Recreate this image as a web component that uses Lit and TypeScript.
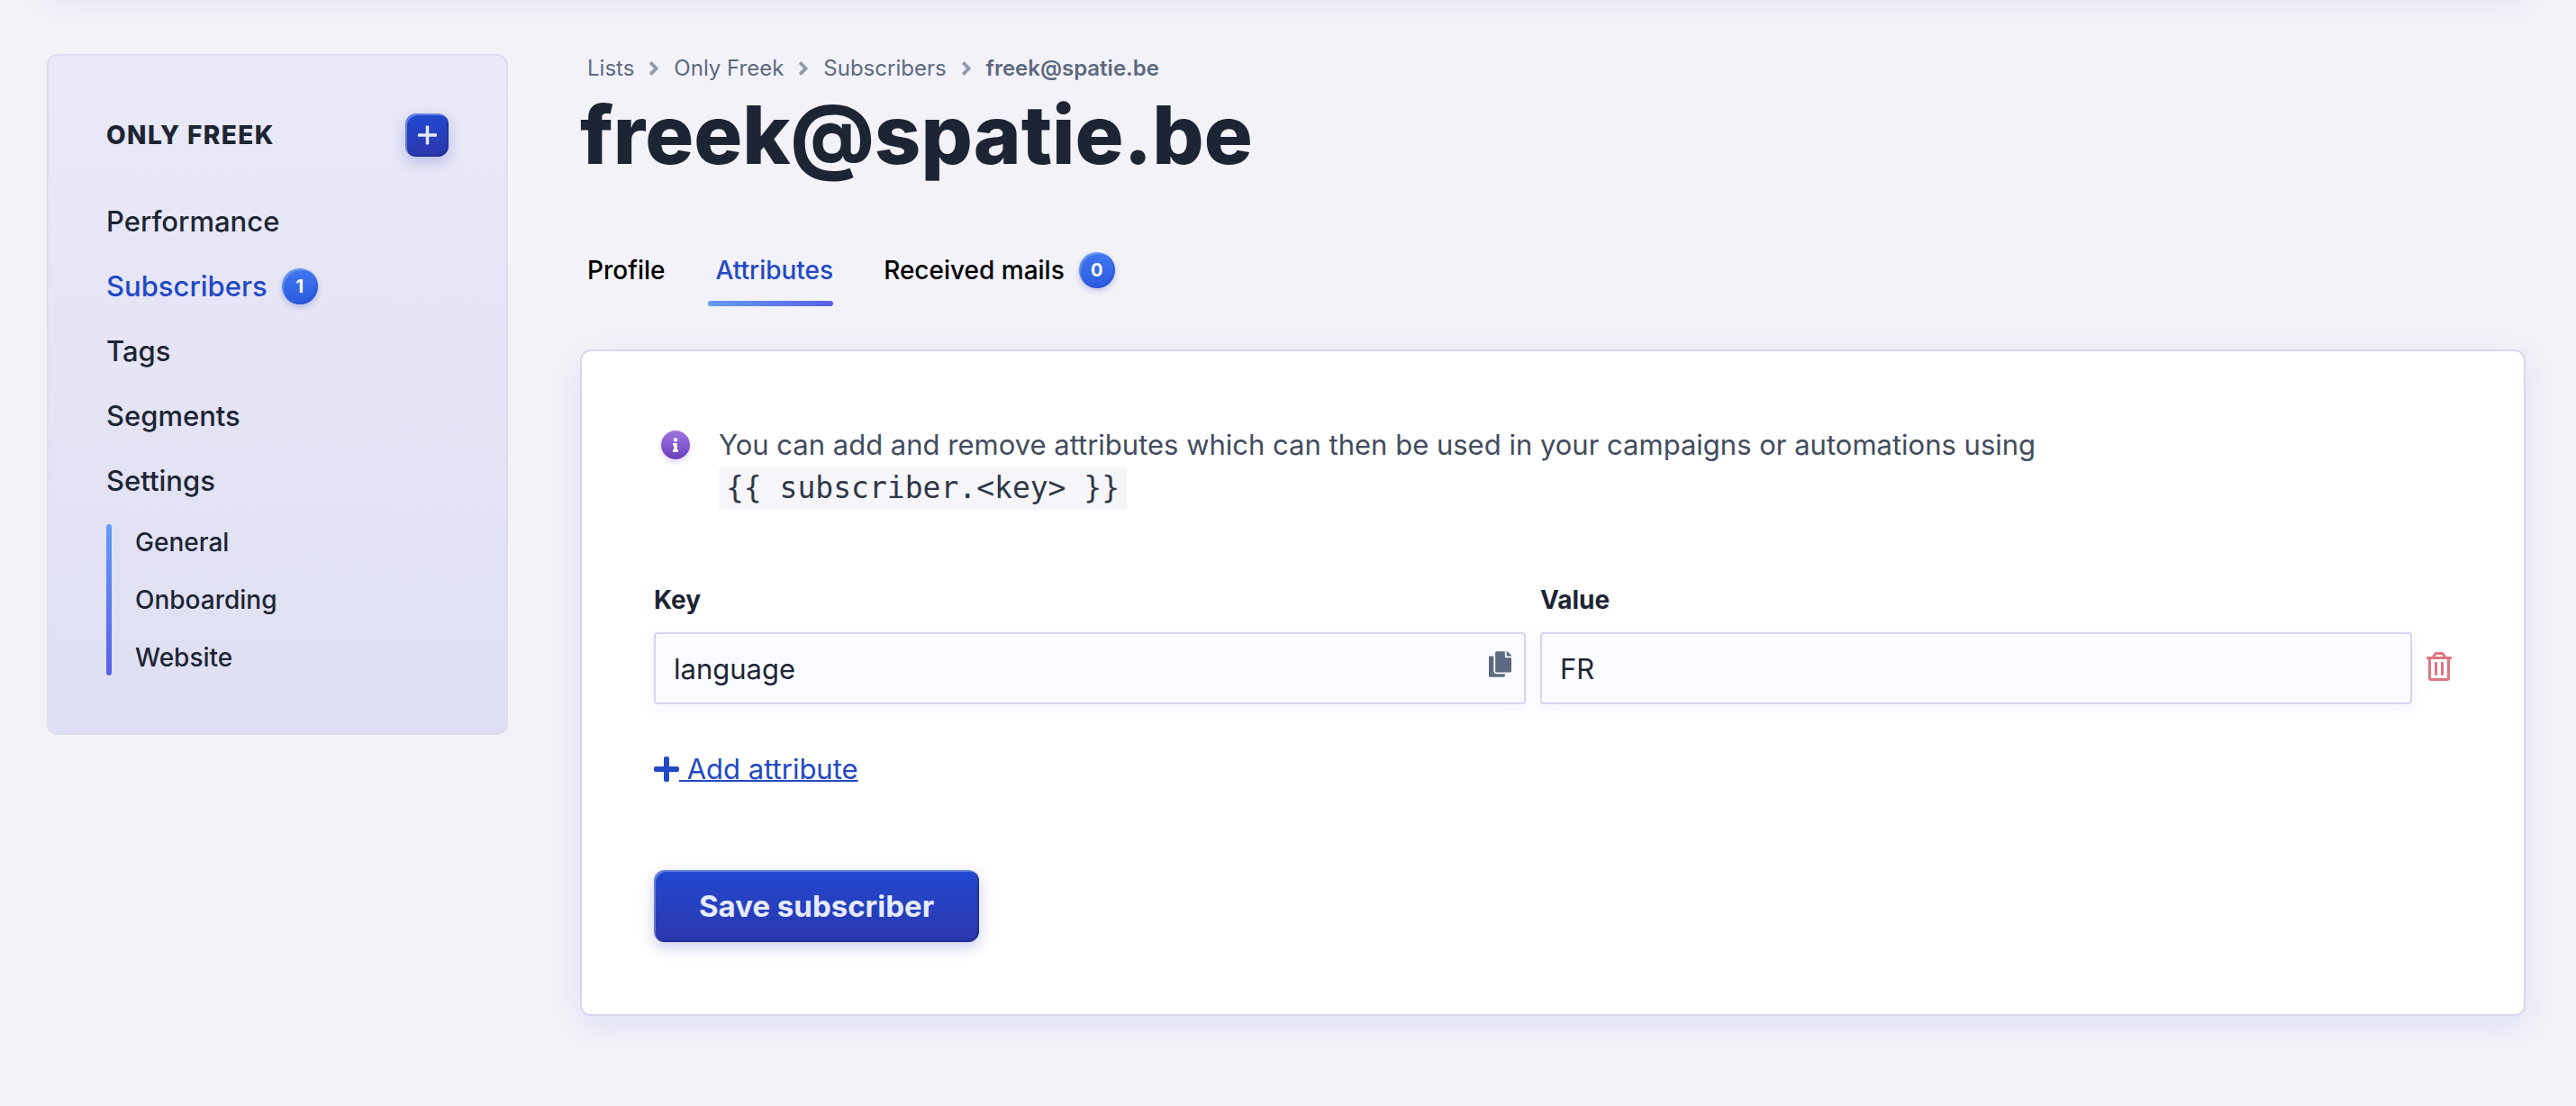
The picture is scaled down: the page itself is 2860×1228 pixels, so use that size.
import { LitElement, html, css, svg } from "lit";
import { customElement, state } from "lit/decorators.js";
import { classMap } from "lit/directives/class-map.js";

const icons = {
  angle: {
    box: "0 0 256 512",
    path: "M224.3 273l-136 136c-9.4 9.4-24.6 9.4-33.9 0l-22.6-22.6c-9.4-9.4-9.4-24.6 0-33.9l96.4-96.4-96.4-96.4c-9.4-9.4-9.4-24.6 0-33.9L54.3 103c9.4-9.4 24.6-9.4 33.9 0l136 136c9.5 9.4 9.5 24.6.1 34z",
  },
  plus: {
    box: "0 0 448 512",
    path: "M416 208H272V64c0-17.67-14.33-32-32-32h-32c-17.67 0-32 14.33-32 32v144H32c-17.67 0-32 14.33-32 32v32c0 17.67 14.33 32 32 32h144v144c0 17.67 14.33 32 32 32h32c17.67 0 32-14.33 32-32V304h144c17.67 0 32-14.33 32-32v-32c0-17.67-14.33-32-32-32z",
  },
  plusThin: {
    box: "0 0 384 512",
    path: "M368 224H224V80c0-8.84-7.16-16-16-16h-32c-8.84 0-16 7.16-16 16v144H16c-8.84 0-16 7.16-16 16v32c0 8.84 7.16 16 16 16h144v144c0 8.84 7.16 16 16 16h32c8.84 0 16-7.16 16-16V288h144c8.84 0 16-7.16 16-16v-32c0-8.84-7.16-16-16-16z",
  },
  info: {
    box: "0 0 192 512",
    path: "M20 424.229h20V279.771H20c-11.046 0-20-8.954-20-20V212c0-11.046 8.954-20 20-20h112c11.046 0 20 8.954 20 20v212.229h20c11.046 0 20 8.954 20 20V492c0 11.046-8.954 20-20 20H20c-11.046 0-20-8.954-20-20v-47.771c0-11.046 8.954-20 20-20zM96 0C56.235 0 24 32.235 24 72s32.235 72 72 72 72-32.235 72-72S135.764 0 96 0z",
  },
  copy: {
    box: "0 0 448 512",
    path: "M320 448v40c0 13.255-10.745 24-24 24H24c-13.255 0-24-10.745-24-24V120c0-13.255 10.745-24 24-24h72v296c0 30.879 25.121 56 56 56h168zm0-344V0H152c-13.255 0-24 10.745-24 24v368c0 13.255 10.745 24 24 24h272c13.255 0 24-10.745 24-24V128H344c-13.2 0-24-10.8-24-24zm120.971-31.029L375.029 7.029A24 24 0 0 0 358.059 0H352v96h96v-6.059a24 24 0 0 0-7.029-16.97z",
  },
  trash: {
    box: "0 0 448 512",
    path: "M268 416h24a12 12 0 0 0 12-12V188a12 12 0 0 0-12-12h-24a12 12 0 0 0-12 12v216a12 12 0 0 0 12 12zM432 80h-82.41l-34-56.7A48 48 0 0 0 274.41 0H173.59a48 48 0 0 0-41.16 23.3L98.41 80H16A16 16 0 0 0 0 96v16a16 16 0 0 0 16 16h16v336a48 48 0 0 0 48 48h288a48 48 0 0 0 48-48V128h16a16 16 0 0 0 16-16V96a16 16 0 0 0-16-16zM171.84 50.91A6 6 0 0 1 177 48h94a6 6 0 0 1 5.15 2.91L293.61 80H154.39zM368 464H80V128h288zm-212-48h24a12 12 0 0 0 12-12V188a12 12 0 0 0-12-12h-24a12 12 0 0 0-12 12v216a12 12 0 0 0 12 12z",
  },
};

const icon = (name: keyof typeof icons) => html`
  <svg class="icon icon-${name}" viewBox=${icons[name].box} aria-hidden="true">
    ${svg`<path fill="currentColor" d=${icons[name].path}></path>`}
  </svg>
`;

interface NavItem {
  label: string;
  count?: number;
  active?: boolean;
}

const listNav: NavItem[] = [
  { label: "Performance" },
  { label: "Subscribers", count: 1, active: true },
  { label: "Tags" },
  { label: "Segments" },
  { label: "Settings" },
];

const settingsNav = ["General", "Onboarding", "Website"];
const crumbs = ["Lists", "Only Freek", "Subscribers"];

const tabs: NavItem[] = [
  { label: "Profile" },
  { label: "Attributes", active: true },
  { label: "Received mails", count: 0 },
];

@customElement("app-root")
export class AppRoot extends LitElement {
  @state() private attributesList = [{ key: "language", value: "FR" }];

  static styles = css`
    :host {
      display: block;
      box-sizing: border-box;
      min-height: 100vh;
      overflow: hidden;
      background: #f3f2f8;
      color: #1d2534;
      font-family: Inter, "Liberation Sans", sans-serif;
      font-size: 31px;
      line-height: 48px;
    }
    *, *::before, *::after { box-sizing: border-box; }
    a { color: inherit; text-decoration: none; }
    button { font: inherit; border: 0; padding: 0; background: none; cursor: pointer; }
    ul, ol { list-style: none; margin: 0; padding: 0; }
    .icon { display: block; flex: none; }

    .topbar {
      height: 64px;
      margin: -76px 56px 72px 52px;
      background: #fff;
      border-radius: 12px;
      box-shadow: 0 10px 32px rgba(66, 100, 220, 0.12);
    }
    .layout {
      display: flex;
      align-items: flex-start;
      gap: 80px;
      padding: 0 56px 100px 52px;
    }

    .sidebar {
      flex: none;
      width: 512px;
      padding: 64px;
      border: 2px solid #dfdef0;
      border-radius: 12px;
      background: linear-gradient(#e9e9f7, #dfdff3);
      font-weight: 500;
    }
    .sidebar-head {
      display: flex;
      align-items: center;
      justify-content: space-between;
      margin-bottom: 48px;
    }
    .sidebar-title {
      margin: 0;
      font-size: 28px;
      font-weight: 800;
      letter-spacing: 0.05em;
      text-transform: uppercase;
    }
    .raised {
      color: #e6ebfd;
      background: linear-gradient(#2149d0, #2b37ad);
      box-shadow:
        inset 2px 2px 0 rgba(255, 255, 255, 0.3),
        inset -2px -2px 0 rgba(26, 42, 120, 0.5),
        0 6px 16px rgba(43, 60, 180, 0.25);
    }
    .add-button {
      display: grid;
      place-items: center;
      width: 48px;
      height: 48px;
      border-radius: 12px;
    }
    .icon-plusThin { width: 21px; height: 28px; }
    .nav { display: grid; gap: 24px; }
    .nav-link, .tab {
      display: flex;
      align-items: center;
      gap: 16px;
    }
    .nav-link.active, .tab.active { color: #2149c4; }
    .badge {
      display: grid;
      place-items: center;
      flex: none;
      width: 40px;
      height: 40px;
      border-radius: 50%;
      color: #fff;
      font-size: 20px;
      line-height: 24px;
      font-weight: 700;
      background: linear-gradient(#4078f0, #2b5ae0);
      box-shadow:
        inset 2px 2px 0 rgba(255, 255, 255, 0.2),
        inset -2px -2px 0 rgba(30, 70, 190, 0.3),
        0 3px 6px rgba(43, 60, 180, 0.25);
    }
    .subnav {
      display: flex;
      gap: 26px;
      margin-top: 24px;
      font-size: 28px;
      line-height: 40px;
    }
    .subnav::before {
      content: "";
      width: 6px;
      border-radius: 3px;
      background: linear-gradient(#639bf5, #5a5fe6);
    }
    .subnav-list { display: grid; gap: 24px; }

    .main { flex: 1; min-width: 0; }
    .crumbs {
      display: flex;
      align-items: center;
      gap: 16px;
      padding: 0 8px;
      font-size: 24px;
      line-height: 32px;
      color: #5c6980;
    }
    .crumb { display: flex; align-items: center; gap: 16px; }
    .crumb-current { font-weight: 600; }
    .icon-angle { width: 12px; height: 24px; color: #8f99ad; }
    .title {
      margin: 2px 0 0;
      font-size: 90px;
      line-height: 112px;
      font-weight: 800;
    }
    .tabs {
      display: flex;
      gap: 48px;
      margin: 60px 0 48px;
      font-size: 28px;
      line-height: 40px;
      font-weight: 500;
      color: #000;
    }
    .tab { padding: 14px 0 14px 8px; border-bottom: 6px solid transparent; }
    .tab-item.active::after {
      content: "";
      display: block;
      height: 6px;
      margin-top: -6px;
      border-radius: 3px;
      background: linear-gradient(90deg, #639bf5, #5a5fe6);
    }

    .card {
      padding: 80px;
      border: 2px solid #d8d6f0;
      border-radius: 12px;
      background: #fff;
      box-shadow: 0 10px 32px rgba(66, 100, 220, 0.12);
    }
    .help {
      display: flex;
      gap: 32px;
      padding-left: 8px;
      color: #434c5e;
    }
    .help-mark {
      display: grid;
      place-items: center;
      flex: none;
      width: 32px;
      height: 32px;
      margin-top: 8px;
      border-radius: 50%;
      color: #fff;
      background: linear-gradient(#9f75e0, #6b3fc0);
      box-shadow: 0 3px 6px rgba(100, 60, 180, 0.2);
    }
    .icon-info { width: 6px; height: 16px; }
    .help-text { margin: 0; max-width: 1536px; }
    .code {
      display: block;
      width: fit-content;
      padding: 0 8px;
      border-radius: 4px;
      background: #f6f6fa;
      color: #2f3746;
      font-family: "DejaVu Sans Mono", monospace;
      font-size: 33px;
    }
    .fields {
      display: grid;
      grid-template-columns: 1fr 1fr 28px;
      gap: 16px;
      align-items: center;
      margin-top: 80px;
    }
    .label {
      font-size: 28px;
      line-height: 40px;
      font-weight: 700;
    }
    .label-value { grid-column: 2 / 4; }
    .field { display: grid; align-items: center; }
    .field > * { grid-area: 1 / 1; }
    .input {
      width: 100%;
      height: 80px;
      padding: 0 20px;
      border: 2px solid #d6d5f0;
      border-radius: 4px;
      background: #fafbff;
      color: #1d2534;
      font: inherit;
      box-shadow: 0 4px 16px rgba(120, 150, 250, 0.12);
      outline: none;
    }
    .copy-button {
      justify-self: end;
      margin: 0 16px 10px 0;
      color: #5c6980;
    }
    .icon-copy { width: 25px; height: 29px; }
    .trash-button { color: #dd7681; }
    .icon-trash { width: 28px; height: 32px; margin-bottom: 4px; }
    .add-link {
      display: flex;
      align-items: center;
      width: fit-content;
      margin-top: 48px;
      color: #2149c4;
    }
    .add-link .icon-plus { width: 28px; height: 32px; }
    .add-text {
      white-space: pre;
      text-decoration: underline;
      text-decoration-thickness: 2px;
    }
    .save-button {
      display: block;
      height: 80px;
      margin-top: 88px;
      padding: 0 50px;
      border-radius: 12px;
      font-size: 33px;
      font-weight: 700;
    }
  `;

  private addAttribute(event: Event) {
    event.preventDefault();
    this.attributesList = [...this.attributesList, { key: "", value: "" }];
  }

  private removeAttribute(index: number) {
    this.attributesList = this.attributesList.filter((_, i) => i !== index);
  }

  private renderSidebar() {
    return html`
      <aside class="sidebar">
        <div class="sidebar-head">
          <h2 class="sidebar-title">Only Freek</h2>
          <button class="add-button raised" type="button" aria-label="Add">${icon("plusThin")}</button>
        </div>
        <nav>
          <ul class="nav">
            ${listNav.map(
              (item) => html`<li>
                <a href="#" class=${classMap({ "nav-link": true, active: !!item.active })}>
                  ${item.label}${item.count !== undefined ? html`<span class="badge">${item.count}</span>` : ""}
                </a>
              </li>`
            )}
          </ul>
          <div class="subnav">
            <ul class="subnav-list">
              ${settingsNav.map((label) => html`<li><a href="#">${label}</a></li>`)}
            </ul>
          </div>
        </nav>
      </aside>
    `;
  }

  private renderForm() {
    return html`
      <form class="card" @submit=${(e: Event) => e.preventDefault()}>
        <div class="help">
          <span class="help-mark">${icon("info")}</span>
          <p class="help-text">
            You can add and remove attributes which can then be used in your campaigns or automations using
            <code class="code">{{ subscriber.&lt;key&gt; }}</code>
          </p>
        </div>
        <div class="fields">
          <label class="label" for="key-0">Key</label>
          <label class="label label-value" for="value-0">Value</label>
          ${this.attributesList.map(
            (row, i) => html`
              <div class="field">
                <input class="input" id="key-${i}" type="text" .value=${row.key} />
                <button class="copy-button" type="button" aria-label="Copy">${icon("copy")}</button>
              </div>
              <input class="input" id="value-${i}" type="text" .value=${row.value} />
              <button class="trash-button" type="button" aria-label="Remove" @click=${() => this.removeAttribute(i)}>
                ${icon("trash")}
              </button>
            `
          )}
        </div>
        <a class="add-link" href="#" @click=${this.addAttribute}>${icon("plus")}<span class="add-text"> Add attribute</span></a>
        <button class="save-button raised" type="submit">Save subscriber</button>
      </form>
    `;
  }

  render() {
    return html`
      <header class="topbar"></header>
      <div class="layout">
        ${this.renderSidebar()}
        <main class="main">
          <nav>
            <ol class="crumbs">
              ${crumbs.map((label) => html`<li class="crumb"><a href="#">${label}</a>${icon("angle")}</li>`)}
              <li class="crumb-current">freek@spatie.be</li>
            </ol>
          </nav>
          <h1 class="title">freek@spatie.be</h1>
          <nav>
            <ul class="tabs">
              ${tabs.map(
                (tab) => html`<li class=${classMap({ "tab-item": true, active: !!tab.active })}>
                  <a href="#" class=${classMap({ tab: true, active: !!tab.active })}>
                    ${tab.label}${tab.count !== undefined ? html`<span class="badge">${tab.count}</span>` : ""}
                  </a>
                </li>`
              )}
            </ul>
          </nav>
          ${this.renderForm()}
        </main>
      </div>
    `;
  }
}
